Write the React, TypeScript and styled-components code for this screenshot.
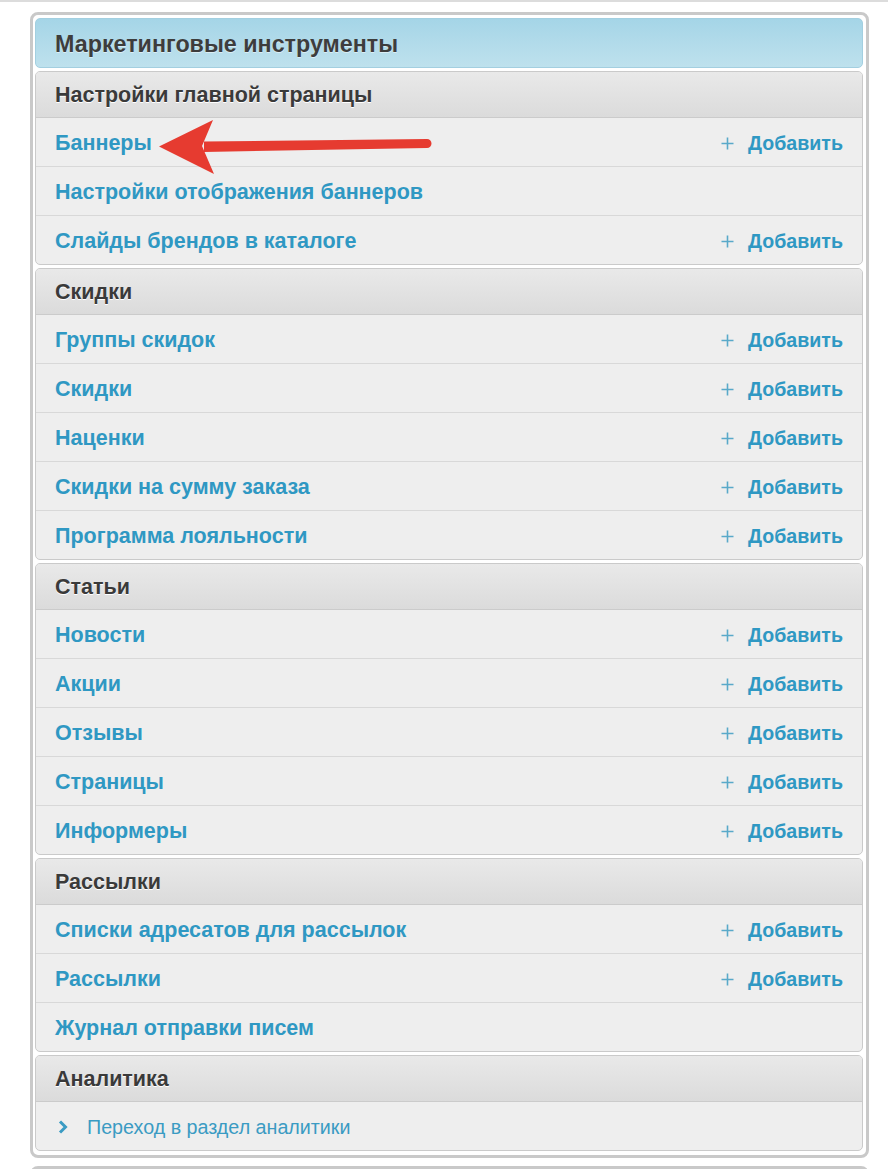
import React from 'react';
import styled, { createGlobalStyle } from 'styled-components';

const GlobalStyle = createGlobalStyle`
  html, body {
    margin: 0;
    padding: 0;
    background: #ffffff;
  }
  body {
    font-family: "Liberation Sans", Arial, sans-serif;
  }
`;

type Item = { title: string; add?: boolean };
type Section = { title: string; items: Item[] };

const sections: Section[] = [
  {
    title: 'Настройки главной страницы',
    items: [
      { title: 'Баннеры', add: true },
      { title: 'Настройки отображения баннеров' },
      { title: 'Слайды брендов в каталоге', add: true },
    ],
  },
  {
    title: 'Скидки',
    items: [
      { title: 'Группы скидок', add: true },
      { title: 'Скидки', add: true },
      { title: 'Наценки', add: true },
      { title: 'Скидки на сумму заказа', add: true },
      { title: 'Программа лояльности', add: true },
    ],
  },
  {
    title: 'Статьи',
    items: [
      { title: 'Новости', add: true },
      { title: 'Акции', add: true },
      { title: 'Отзывы', add: true },
      { title: 'Страницы', add: true },
      { title: 'Информеры', add: true },
    ],
  },
  {
    title: 'Рассылки',
    items: [
      { title: 'Списки адресатов для рассылок', add: true },
      { title: 'Рассылки', add: true },
      { title: 'Журнал отправки писем' },
    ],
  },
];

const Page = styled.div`
  position: relative;
  width: 888px;
  border-top: 2px solid #dcdcdc;
  padding: 10px 0 0 30px;
  box-sizing: border-box;
`;

const Outer = styled.div`
  width: 839px;
  box-sizing: border-box;
  border: 3px solid #c9c9c9;
  border-radius: 8px;
  padding: 3px 3px 4px 2px;
  background: #ffffff;
`;

const NextOuter = styled(Outer)`
  margin-top: 8px;
  height: 40px;
`;

const MainHeader = styled.div`
  height: 50px;
  box-sizing: border-box;
  margin-bottom: 1px;
  border: 1px solid #a3cfe0;
  border-radius: 5px;
  background: linear-gradient(#a5d5e7, #bee1ed);
  display: flex;
  align-items: center;
  padding: 2px 0 0 19px;
  font-size: 23.3px;
  font-weight: bold;
  color: #3d3d3d;
  text-shadow: 0 1px 0 rgba(255, 255, 255, 0.5);
`;

const Block = styled.div`
  margin-top: 3px;
  border: 1px solid #cacaca;
  border-radius: 5px;
  background: #eeeeee;
  overflow: hidden;
`;

const BlockHeader = styled.div`
  height: 43px;
  padding: 2px 0 0 19px;
  border-bottom: 1px solid #cbcbcb;
  background: linear-gradient(#e9e9e9, #dbdbdb);
  display: flex;
  align-items: center;
  font-size: 21.5px;
  font-weight: bold;
  color: #3a3a3a;
  text-shadow: 0 1px 0 #ffffff;
`;

const Row = styled.div`
  height: 46px;
  display: flex;
  align-items: center;
  justify-content: space-between;
  padding: 2px 19px 0;
  & + & {
    border-top: 1px solid #d8d8d8;
  }
`;

const Link = styled.a`
  font-size: 21.5px;
  font-weight: bold;
  color: #2f98c3;
  text-decoration: none;
  display: flex;
  align-items: center;
`;

const AddLink = styled(Link)`
  font-size: 19.6px;
  gap: 14px;
`;

const PlainLink = styled(Link)`
  font-size: 19.7px;
  font-weight: normal;
  color: #3a9bc3;
  gap: 19px;
  padding-left: 3px;
`;

const Arrow = styled.svg`
  position: absolute;
  left: 0;
  top: 0;
  pointer-events: none;
`;

const PlusIcon = () => (
  <svg width="13" height="13" viewBox="0 0 13 13">
    <path d="M6.5 0.5v12M0.5 6.5h12" stroke="#59a9c9" strokeWidth="1.6" />
  </svg>
);

const Chevron = () => (
  <svg width="10" height="14" viewBox="0 0 10 14">
    <path d="M2 1.5l5.5 5.5L2 12.5" fill="none" stroke="#3a9bc3" strokeWidth="3" />
  </svg>
);

export default function App() {
  return (
    <>
      <GlobalStyle />
      <Page>
        <Outer>
          <MainHeader>Маркетинговые инструменты</MainHeader>
          {sections.map((s) => (
            <Block key={s.title}>
              <BlockHeader>{s.title}</BlockHeader>
              {s.items.map((it) => (
                <Row key={it.title}>
                  <Link href="#">{it.title}</Link>
                  {it.add && (
                    <AddLink href="#">
                      <PlusIcon />
                      Добавить
                    </AddLink>
                  )}
                </Row>
              ))}
            </Block>
          ))}
          <Block>
            <BlockHeader>Аналитика</BlockHeader>
            <Row>
              <PlainLink href="#">
                <Chevron />
                Переход в раздел аналитики
              </PlainLink>
            </Row>
          </Block>
        </Outer>
        <NextOuter />
        <Arrow width="894" height="200" viewBox="0 0 894 200">
          <path d="M204 139.5 L427 137 A4.5 4.5 0 0 1 427 146 L204 150 Z" fill="#e63b30" />
          <path d="M159 144.5 L213 118 L202 144 L214 172 Z" fill="#e63b30" />
        </Arrow>
      </Page>
    </>
  );
}
